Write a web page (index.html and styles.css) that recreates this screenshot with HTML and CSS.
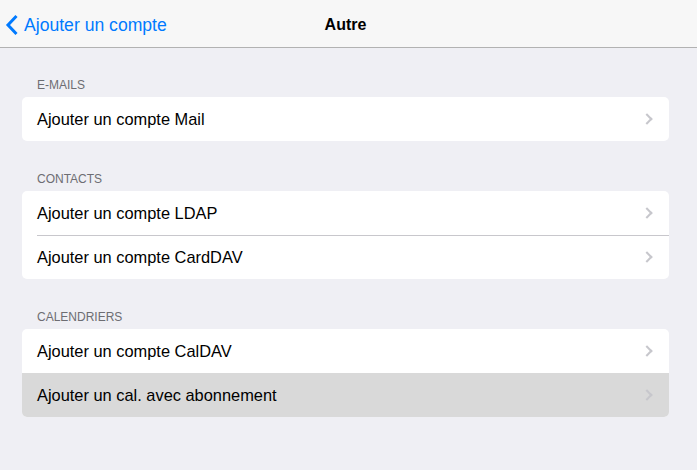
FILE: index.html
```html
<!DOCTYPE html>
<html lang="fr">
<head>
	<meta charset="UTF-8">
	<title>Autre</title>
<link rel="stylesheet" href="styles.css">
</head>
<body>
	<div class="navbar">
		<a href="javascript:;" class="back">
			<svg class="back-icon" width="14" height="22" viewBox="0 0 14 22"><path d="M11.5 2 L3 11 L11.5 20" fill="none" stroke="#007aff" stroke-width="3"/></svg>
			<span>Ajouter un compte</span>
		</a>
		<div class="title">Autre</div>
		<div></div>
	</div>

	<div class="content">
		<div class="section">
			<div class="section-title">E-MAILS</div>
			<div class="group">
				<a href="javascript:;" class="row">Ajouter un compte Mail<i class="chevron"></i></a>
			</div>
		</div>

		<div class="section">
			<div class="section-title">CONTACTS</div>
			<div class="group">
				<a href="javascript:;" class="row">Ajouter un compte LDAP<i class="chevron"></i></a>
				<a href="javascript:;" class="row">Ajouter un compte CardDAV<i class="chevron"></i></a>
			</div>
		</div>

		<div class="section">
			<div class="section-title">CALENDRIERS</div>
			<div class="group">
				<a href="javascript:;" class="row">Ajouter un compte CalDAV<i class="chevron"></i></a>
				<a href="javascript:;" class="row on">Ajouter un cal. avec abonnement<i class="chevron"></i></a>
			</div>
		</div>
	</div>
</body>
</html>
```

FILE: styles.css
```css
* {
	margin: 0;
	padding: 0;
	box-sizing: border-box;
}
body {
	background: #efeff4;
	font-family: "Liberation Sans", Arial, sans-serif;
	color: #000;
}
a {
	color: inherit;
	text-decoration: none;
}
.navbar {
	height: 48px;
	background: #f7f7f7;
	border-bottom: 1px solid #b2b2b2;
	display: grid;
	grid-template-columns: 1fr auto 1fr;
	align-items: center;
	padding-top: 3px;
}
.back {
	display: flex;
	align-items: center;
	gap: 5px;
	padding-left: 5px;
	color: #007aff;
	font-size: 17.6px;
}
.back-icon {
	display: block;
	margin-top: -1px;
}
.title {
	font-size: 16px;
	font-weight: bold;
	margin-right: 6px;
}
.content {
	padding: 0 28px 0 22px;
}
.section {
	padding-top: 30px;
}
.section + .section {
	padding-top: 31px;
}
.section-title {
	font-size: 12px;
	line-height: 14px;
	color: #6d6d72;
	padding-left: 15px;
	margin-bottom: 5px;
}
.group {
	background: #fff;
	border-radius: 5px;
	overflow: hidden;
}
.row {
	height: 44px;
	display: flex;
	align-items: center;
	justify-content: space-between;
	padding: 0 15px;
	font-size: 16.4px;
	position: relative;
}
.row + .row:before {
	content: "";
	position: absolute;
	left: 15px;
	right: 0;
	top: 0;
	border-top: 1px solid #c8c7cc;
}
.row.on {
	background: #d9d9d9;
}
.row.on:before {
	display: none;
}
.chevron {
	width: 8px;
	height: 8px;
	border-top: 2px solid #c7c7cc;
	border-right: 2px solid #c7c7cc;
	transform: rotate(45deg);
	margin-right: 3px;
}
```
